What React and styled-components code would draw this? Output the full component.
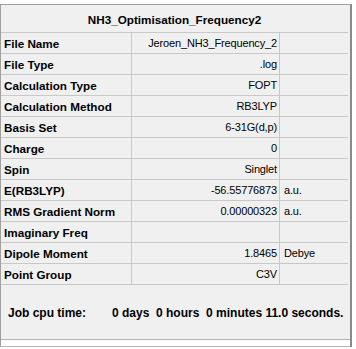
import React from "react";
import styled, { createGlobalStyle } from "styled-components";

const GlobalStyle = createGlobalStyle`
    html, body {
        margin: 0;
        padding: 0;
        background: #ffffff;
    }
    body {
        font-family: "Liberation Sans", Arial, sans-serif;
        color: #000;
    }
`;

const Panel = styled.div`
    margin-top: 4px;
    width: 352px;
    background: #f0f0f0;
    border-top: 1px solid #a0a0a0;
    border-left: 1px solid #a0a0a0;
    border-right: 2px solid #8a8a8a;
    box-sizing: border-box;
`;

const Grid = styled.div`
    display: grid;
    grid-template-columns: 131px 148px 68px;
`;

const Title = styled.div`
    grid-column: 1 / -1;
    height: 28px;
    box-sizing: border-box;
    border-bottom: 1px solid #c8c8c8;
    display: flex;
    align-items: center;
    justify-content: center;
    padding-top: 1px;
    font-weight: bold;
    font-size: 11.7px;
`;

const Cell = styled.div`
    height: 21px;
    box-sizing: border-box;
    border-bottom: 1px solid #c8c8c8;
    border-right: ${p => (p.$last ? "none" : "1px solid #c8c8c8")};
    display: flex;
    align-items: center;
    justify-content: ${p => (p.$align === "right" ? "flex-end" : "flex-start")};
    padding: ${p => (p.$align === "right" ? "0 2px 0 0" : p.$unit ? "0 0 0 4px" : "0 0 0 3px")};
    font-size: ${p => (p.$bold ? "11.7px" : "11px")};
    font-weight: ${p => (p.$bold ? "bold" : "normal")};
    letter-spacing: ${p => (p.$bold ? "0" : "-0.15px")};
    white-space: nowrap;
    overflow: hidden;
`;

const Footer = styled.div`
    height: 55px;
    box-sizing: border-box;
    border-bottom: 1px solid #b4b4b4;
    display: flex;
    align-items: center;
    padding: 2px 0 0 7px;
    font-weight: bold;
    font-size: 12px;
    white-space: pre;
`;

const CpuLabel = styled.span`
    width: 104px;
`;

const Track = styled.div`
    height: 7px;
    background: #ffffff;
    border-bottom: 1px solid #b4b4b4;
    box-sizing: border-box;
`;

const rows = [
    ["File Name", "Jeroen_NH3_Frequency_2", ""],
    ["File Type", ".log", ""],
    ["Calculation Type", "FOPT", ""],
    ["Calculation Method", "RB3LYP", ""],
    ["Basis Set", "6-31G(d,p)", ""],
    ["Charge", "0", ""],
    ["Spin", "Singlet", ""],
    ["E(RB3LYP)", "-56.55776873", "a.u."],
    ["RMS Gradient Norm", "0.00000323", "a.u."],
    ["Imaginary Freq", "", ""],
    ["Dipole Moment", "1.8465", "Debye"],
    ["Point Group", "C3V", ""],
];

const App = () => {
    return (
        <>
            <GlobalStyle />
            <Panel>
                <Grid>
                    <Title>NH3_Optimisation_Frequency2</Title>
                    {rows.map(([label, value, unit]) => (
                        <React.Fragment key={label}>
                            <Cell $bold>{label}</Cell>
                            <Cell $align="right">{value}</Cell>
                            <Cell $unit $last>{unit}</Cell>
                        </React.Fragment>
                    ))}
                </Grid>
                <Footer>
                    <CpuLabel>Job cpu time:</CpuLabel>
                    {"0 days  0 hours  0 minutes 11.0 seconds."}
                </Footer>
                <Track />
            </Panel>
        </>
    );
};

export default App;
